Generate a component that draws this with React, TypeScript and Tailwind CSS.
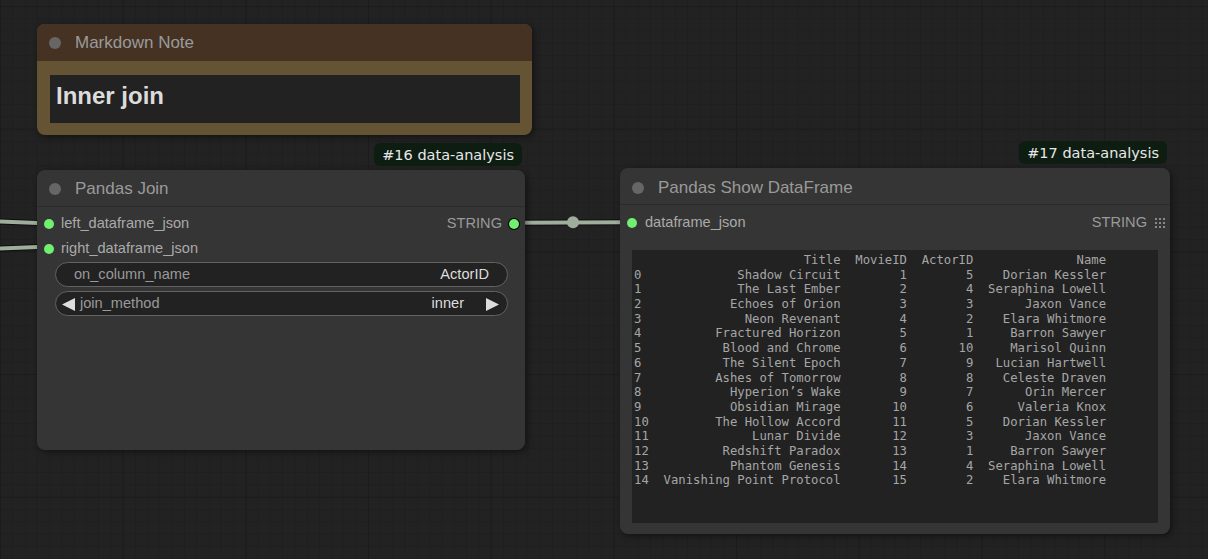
import React from 'react';

interface Row {
    title: string;
    movieId: number;
    actorId: number;
    name: string;
}

const rows: Row[] = [
    { title: 'Shadow Circuit', movieId: 1, actorId: 5, name: 'Dorian Kessler' },
    { title: 'The Last Ember', movieId: 2, actorId: 4, name: 'Seraphina Lowell' },
    { title: 'Echoes of Orion', movieId: 3, actorId: 3, name: 'Jaxon Vance' },
    { title: 'Neon Revenant', movieId: 4, actorId: 2, name: 'Elara Whitmore' },
    { title: 'Fractured Horizon', movieId: 5, actorId: 1, name: 'Barron Sawyer' },
    { title: 'Blood and Chrome', movieId: 6, actorId: 10, name: 'Marisol Quinn' },
    { title: 'The Silent Epoch', movieId: 7, actorId: 9, name: 'Lucian Hartwell' },
    { title: 'Ashes of Tomorrow', movieId: 8, actorId: 8, name: 'Celeste Draven' },
    { title: 'Hyperion’s Wake', movieId: 9, actorId: 7, name: 'Orin Mercer' },
    { title: 'Obsidian Mirage', movieId: 10, actorId: 6, name: 'Valeria Knox' },
    { title: 'The Hollow Accord', movieId: 11, actorId: 5, name: 'Dorian Kessler' },
    { title: 'Lunar Divide', movieId: 12, actorId: 3, name: 'Jaxon Vance' },
    { title: 'Redshift Paradox', movieId: 13, actorId: 1, name: 'Barron Sawyer' },
    { title: 'Phantom Genesis', movieId: 14, actorId: 4, name: 'Seraphina Lowell' },
    { title: 'Vanishing Point Protocol', movieId: 15, actorId: 2, name: 'Elara Whitmore' },
];

// pandas-style to_string()
const tableText = [
    '  ' + '  ' + 'Title'.padStart(24) + '  ' + 'MovieID' + '  ' + 'ActorID' + '  ' + 'Name'.padStart(16),
    ...rows.map((r, i) =>
        String(i).padEnd(2) + '  ' + r.title.padStart(24) + '  ' + String(r.movieId).padStart(7) + '  ' +
        String(r.actorId).padStart(7) + '  ' + r.name.padStart(16)
    ),
].join('\n');

function Badge({ children }: { children: React.ReactNode }) {
    return (
        <div
            className="absolute -top-[27px] right-[3px] h-[23px] px-[8px] rounded-md bg-[#0e1d11] text-[#e8e8e8] text-[14.5px] leading-[23px] pt-[1px]"
            style={{ fontFamily: '"DejaVu Sans", sans-serif' }}
        >
            {children}
        </div>
    );
}

function Dot({ outline = false }: { outline?: boolean }) {
    return (
        <span
            className={`block w-[10px] h-[10px] rounded-full bg-[#70ef70] ${outline ? 'ring-1 ring-black' : ''}`}
        />
    );
}

function NodeTitle({ label, lower = false }: { label: string; lower?: boolean }) {
    return (
        <div
            className={`h-[37px] flex items-center pl-[12px] border-b border-[#2b2b2b] shrink-0 ${lower ? 'pt-[3px]' : 'pt-[1px]'}`}
        >
            <span className="w-[12px] h-[12px] rounded-full bg-[#666]" />
            <span className="ml-[14px] text-[17px] text-[#9a9a9a]">{label}</span>
        </div>
    );
}

function GridIcon() {
    return (
        <svg width="10" height="10" viewBox="0 0 10 10" fill="#8a8a8a">
            {[0, 4, 8].map((y) =>
                [0, 4, 8].map((x) => <rect key={`${x}-${y}`} x={x} y={y} width="2" height="2" />)
            )}
        </svg>
    );
}

function Arrow({ dir }: { dir: 'left' | 'right' }) {
    return (
        <svg width="13" height="13" viewBox="0 0 13 13" fill="#dddddd">
            {dir === 'left' ? <path d="M0 6.5 L13 0 L13 13 Z" /> : <path d="M13 6.5 L0 0 L0 13 Z" />}
        </svg>
    );
}

export default function App() {
    return (
        <div
            className="relative w-[1208px] h-[559px] overflow-hidden bg-[#222222] bg-[linear-gradient(to_right,#1c1c1c_1px,transparent_1px),linear-gradient(to_bottom,#1c1c1c_1px,transparent_1px),linear-gradient(to_right,#1f1f1f_1px,transparent_1px),linear-gradient(to_bottom,#1f1f1f_1px,transparent_1px)] bg-[size:122.7px_122.7px,122.7px_122.7px,12.27px_12.27px,12.27px_12.27px] bg-[position:0px_6px,0px_6px,0px_6px,0px_6px]"
            style={{ fontFamily: '"Liberation Sans", Arial, sans-serif' }}
        >
            {/* links */}
            <svg className="absolute inset-0" width="1208" height="559">
                <g stroke="#000" strokeWidth="6" fill="none" opacity="0.6">
                    <path d="M0 221.5 L44 223.3" />
                    <path d="M0 248.5 L44 246.8" />
                    <path d="M514 222.8 L632 222.2" />
                </g>
                <g stroke="#9fae9c" strokeWidth="4" fill="none">
                    <path d="M0 221.5 L44 223.3" />
                    <path d="M0 248.5 L44 246.8" />
                    <path d="M514 222.8 L632 222.2" />
                </g>
                <circle cx="573" cy="222.3" r="6" fill="#9fae9c" />
            </svg>

            {/* Markdown Note */}
            <div className="absolute left-[37px] top-[24px] w-[495px] h-[111px] rounded-lg bg-[#655433] shadow-[2px_2px_6px_rgba(0,0,0,0.45)] flex flex-col overflow-hidden">
                <div className="h-[37px] flex items-center pl-[12px] bg-[#453223] shrink-0">
                    <span className="w-[12px] h-[12px] rounded-full bg-[#666]" />
                    <span className="ml-[14px] text-[17px] text-[#9a9a9a]">Markdown Note</span>
                </div>
                <div className="flex-1 pt-[14px] pb-[12px] pl-[13px] pr-[12px] flex">
                    <div className="flex-1 bg-[#222] flex items-center px-[6px] pb-[6px]">
                        <span className="text-[24px] font-bold text-[#dcdcdc]">Inner join</span>
                    </div>
                </div>
            </div>

            {/* Pandas Join */}
            <div className="absolute left-[37px] top-[170px] w-[488px] h-[280px] rounded-lg bg-[#353535] shadow-[2px_2px_6px_rgba(0,0,0,0.45)] flex flex-col">
                <Badge>#16 data-analysis</Badge>
                <NodeTitle label="Pandas Join" />
                <div className="flex flex-col pt-[4px] text-[14.6px]">
                    <div className="h-[25px] flex items-center pl-[7px] pr-[6px]">
                        <Dot />
                        <span className="ml-[7px] text-[#aaa]">left_dataframe_json</span>
                        <span className="ml-auto mr-[7px] text-[#9a9a9a]">STRING</span>
                        <Dot outline />
                    </div>
                    <div className="h-[25px] flex items-center pl-[7px]">
                        <Dot />
                        <span className="ml-[7px] text-[#aaa]">right_dataframe_json</span>
                    </div>
                    <div className="flex flex-col gap-[4px] mt-[1px] ml-[18px] mr-[17px]">
                        <div className="h-[25px] rounded-full border border-[#626262] bg-[#222] flex items-center pl-[18px] pr-[18px]">
                            <span className="text-[#999]">on_column_name</span>
                            <span className="ml-auto text-[#ddd]">ActorID</span>
                        </div>
                        <div className="h-[25px] rounded-full border border-[#626262] bg-[#222] flex items-center pl-[6px] pr-[8px] pt-[1px]">
                            <Arrow dir="left" />
                            <span className="ml-[5px] text-[#999]">join_method</span>
                            <span className="ml-auto text-[#ddd]">inner</span>
                            <span className="ml-[22px]">
                                <Arrow dir="right" />
                            </span>
                        </div>
                    </div>
                </div>
            </div>

            {/* Pandas Show DataFrame */}
            <div className="absolute left-[620px] top-[168px] w-[550px] h-[366px] rounded-lg bg-[#353535] shadow-[2px_2px_6px_rgba(0,0,0,0.45)] flex flex-col">
                <Badge>#17 data-analysis</Badge>
                <NodeTitle label="Pandas Show DataFrame" lower />
                <div className="h-[34px] flex items-center pl-[7px] pr-[5px] pt-[2px] text-[14.6px]">
                    <Dot />
                    <span className="ml-[8px] text-[#aaa]">dataframe_json</span>
                    <span className="ml-auto mr-[8px] text-[#9a9a9a]">STRING</span>
                    <GridIcon />
                </div>
                <div className="flex-1 mt-[11px] mx-[12px] mb-[11px] bg-[#222] overflow-hidden">
                    <pre
                        className="m-0 pt-[3px] pl-[2px] text-[12.25px] leading-[1.2] text-[#a6a6a6] whitespace-pre"
                        style={{ fontFamily: '"DejaVu Sans Mono", monospace' }}
                    >
                        {tableText}
                    </pre>
                </div>
            </div>
        </div>
    );
}
